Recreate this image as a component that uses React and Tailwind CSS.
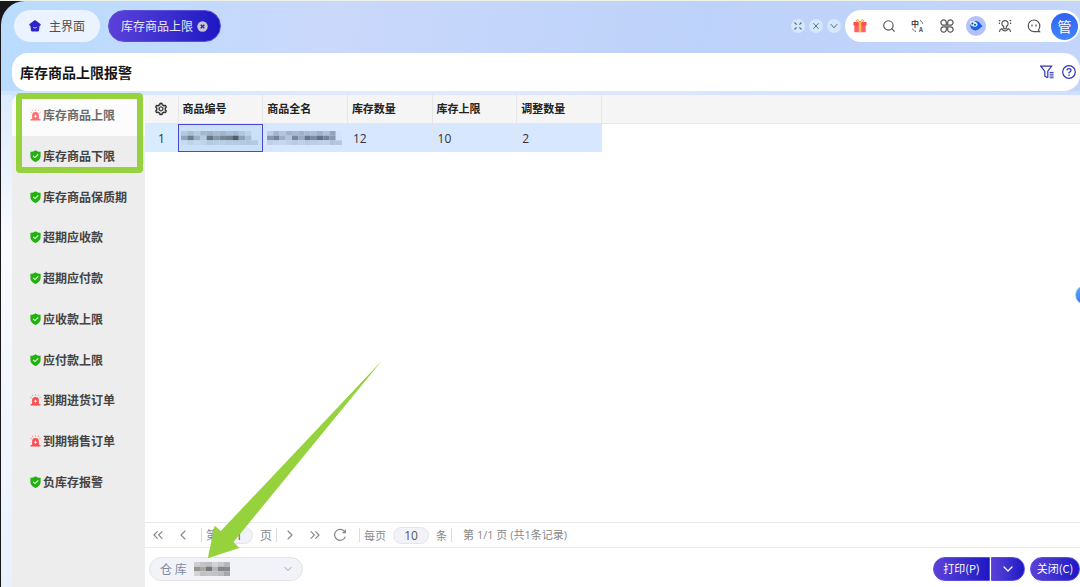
import { useState } from 'react';
import { AiOutlineSetting } from 'react-icons/ai';
import { ChevronDown, ChevronLeft, ChevronRight, ChevronsLeft, ChevronsRight, Search } from 'lucide-react';

const menu = [
  { name: '库存商品上限', alarm: true },
  { name: '库存商品下限' },
  { name: '库存商品保质期' },
  { name: '超期应收款' },
  { name: '超期应付款' },
  { name: '应收款上限' },
  { name: '应付款上限' },
  { name: '到期进货订单', alarm: true },
  { name: '到期销售订单', alarm: true },
  { name: '负库存报警' },
];

const columns = ['商品编号', '商品全名', '库存数量', '库存上限', '调整数量'];

// Pixelated values, one string per row of blocks
const codeMosaic = [
  ['#b3c9de', '#a7bdd3', '#b6cce2', '#a3b8cd', '#9db3c9', '#a5bbd1', '#a0b6cc', '#a9bfd5', '#a4bad0', '#b0c6dc', '#bcd2e9', '#cbe1f8'],
  ['#93a6b9', '#6f7e8d', '#9cafc3', '#b5cade', '#677685', '#8496a8', '#74869a', '#71808f', '#505c68', '#8ea1b5', '#a8bed4', '#cbe1f8'],
  ['#c5dbf1', '#bdd3e9', '#c3d9ef', '#bfd5eb', '#b4cae0', '#b8cee4', '#b9cfe5', '#b5cbe1', '#b4cae0', '#b3c9df', '#b2c8de', '#b4cae0'],
];
const nameMosaic = [
  ['#bccce5', '#a7b6cf', '#b3c4dd', '#a2b2cb', '#a7b8d1', '#9fafca', '#a7b8d1', '#abbcd5', '#a0b0c9', '#afc0da', '#93a3bb', '#d3e4fc'],
  ['#8896ac', '#75839a', '#9dadc6', '#b2c3dc', '#79879e', '#9aaac3', '#68758a', '#7c8aa1', '#62708a', '#76839a', '#8998af', '#d3e4fc'],
  ['#bfcfe8', '#c3d3ec', '#c6d6ef', '#c0d0e9', '#bacae3', '#bfcfe8', '#b9c9e2', '#bccce5', '#bfcfe8', '#c0d0e9', '#b2c2db', '#b6c6df'],
];
const storeMosaic = [
  ['#cfcfd1', '#c4c5c8', '#bdbfc3', '#d1d3d7', '#c5c7cb', '#b7b8bb'],
  ['#9c968f', '#a8a7a7', '#777777', '#b4b5b8', '#85868a', '#8a8a8c'],
  ['#d3d4d8', '#bfc0c3', '#c3c4c8', '#c0c1c4', '#bbbcc0', '#a6a7aa'],
];

function Mosaic({ rows, className }) {
  return (
    <svg className={className} viewBox={`0 0 ${rows[0].length * 6} 15`} preserveAspectRatio="none" aria-hidden="true">
      {rows.map((row, y) => row.map((c, x) => <rect key={`${x}-${y}`} x={x * 6} y={y * 5} width="6" height="5" fill={c} />))}
    </svg>
  );
}

export default function App() {
  const [active, setActive] = useState(0);

  return (
    <div className="min-h-screen flex flex-col relative overflow-hidden bg-[#17171c] border-t border-[#edf2e6] pl-px text-xs font-['Noto_Sans_CJK_SC',sans-serif]">
      <div className="flex-1 flex flex-col rounded-tl-3xl bg-[#f8f9ff] bg-[linear-gradient(100deg,#b9dcff_0%,#c9d8fb_28%,#bdd2fa_60%,#c6d6fb_100%)]">
        <Header />

        <div className="ml-[11px] h-[38px] shrink-0 bg-white rounded-2xl flex items-center justify-between pl-2 pr-1">
          <h1 className="text-sm font-bold text-[#151515]">库存商品上限报警</h1>
          <div className="flex items-center gap-2">
            <button aria-label="筛选"><FilterIcon /></button>
            <button aria-label="帮助"><HelpIcon /></button>
          </div>
        </div>

        <div className="flex-1 flex pt-1 pl-[11px] bg-[linear-gradient(90deg,#cfe5ff_0%,#e2eaff_35%,#cfdffc_100%)]">
          <div className="relative flex w-[133px] shrink-0 rounded-tl-lg bg-[#ededed]">
            {/* Page backdrop beside the menu */}
            <div className="absolute -left-[11px] top-0 bottom-0 w-[11px] bg-linear-to-b from-[#dcebff] via-[#f9faff] via-30% to-[#eaf1fd]" />
            <nav className="grid grid-rows-10 w-full h-[407px]">
              {menu.map((item, i) => (
                <button
                  key={item.name}
                  onClick={() => setActive(i)}
                  className={`flex items-center gap-[2px] pl-[18px] text-left font-bold ${i === active ? 'bg-[#fcfcfc] text-[#6b6b6b] rounded-tl-lg' : 'text-[#444]'}`}
                >
                  {item.alarm ? <AlarmIcon faded={i === active} /> : <ShieldIcon />}
                  {item.name}
                </button>
              ))}
            </nav>
            <div className="absolute left-1 -top-[2px] w-[127px] h-20 border-6 border-[#95d23e] rounded-sm pointer-events-none" />
          </div>

          <main className="flex-1 min-w-0 flex flex-col bg-white">
            <div className="flex-1">
              <StockTable />
            </div>
            <Footer />
          </main>
        </div>
      </div>

      {/* Floating assistant, mostly tucked behind the edge */}
      <button aria-label="助手" className="absolute top-[284px] -right-[15px] size-5 rounded-full border border-[#8fe0f4] bg-linear-to-b from-[#5aa8fb] to-[#4d6df3]" />
    </div>
  );
}

function Header() {
  const small = 'size-[14px] rounded-full bg-[#d3e8fd] text-[#5c6672] flex items-center justify-center';
  const tool = 'w-[29px] h-8 flex items-center justify-center text-[#555]';

  return (
    <header className="flex items-center pt-[9px] pb-[11px] pl-[13px]">
      <button className="h-8 w-[86px] rounded-full bg-[#eaf3ff] flex items-center justify-center gap-2 text-[#505050]">
        <HomeIcon />
        主界面
      </button>
      <button className="ml-2 h-8 w-[113px] rounded-full border border-[#5a50dc] bg-linear-to-r from-[#5b40d8] to-[#1d16c4] flex items-center justify-center gap-1 text-[#e9e8fa]">
        库存商品上限
        <CloseDot />
      </button>

      <div className="ml-auto flex items-center gap-1 pr-1">
        <button aria-label="收起" className={small}>
          <svg width="8" height="8" viewBox="0 0 8 8" fill="none" stroke="currentColor"><path d="M.5.5L2.6 2.6M7.5.5L5.4 2.6M.5 7.5L2.6 5.4M7.5 7.5L5.4 5.4" strokeWidth="1.1" /></svg>
        </button>
        <button aria-label="关闭全部" className={small}>
          <svg width="8" height="8" viewBox="0 0 8 8" fill="none" stroke="currentColor"><path d="M1.4 1.2l5.2 5.6M6.6 1.2L1.4 6.8" strokeWidth=".9" /></svg>
        </button>
        <button aria-label="更多" className={small}>
          <svg width="8" height="8" viewBox="0 0 8 8" fill="none" stroke="currentColor"><path d="M.8 2.2L4 5.8l3.2-3.6" /></svg>
        </button>
      </div>

      <div className="flex items-center bg-white rounded-full pr-[2px]">
        <button aria-label="礼物" className={tool}><GiftIcon /></button>
        <button aria-label="搜索" className={tool}><Search size={14} strokeWidth={1.9} /></button>
        <button aria-label="语言" className={tool}><LanguageIcon /></button>
        <button aria-label="应用" className={tool}><CloverIcon /></button>
        <button aria-label="小助手" className={tool}><MascotIcon /></button>
        <button aria-label="客服" className={tool}><PersonIcon /></button>
        <button aria-label="消息" className={tool}><ChatIcon /></button>
        <button className="ml-[3px] size-[27px] rounded-full bg-linear-to-b from-[#2f62f4] to-[#4584fb] text-sm leading-none text-white flex items-center justify-center">管</button>
      </div>
    </header>
  );
}

function StockTable() {
  return (
    <div className="relative">
      <div className="absolute inset-x-0 top-0 h-[29px] bg-[#f5f5f5] border-b border-[#e6e6e6]" />
      <table className="relative table-fixed w-[457px] text-[11px] border-collapse">
        <thead>
          <tr className="h-[28px] text-[#222]">
            <th className="w-[33px] border-r border-b border-[#e6e6e6]">
              <button aria-label="列设置" className="block mx-auto"><AiOutlineSetting size={14} stroke="currentColor" strokeWidth={24} /></button>
            </th>
            {columns.map((c) => (
              <th key={c} className="px-1 text-left font-bold border-r border-b border-[#e6e6e6]">{c}</th>
            ))}
          </tr>
        </thead>
        <tbody>
          <tr className="h-[29px] bg-[#d6e7ff] text-xs text-[#333] font-['Open_Sans',sans-serif]">
            <td className="pt-[2px] text-center bg-[#d8ebff]">1</td>
            <td className="p-0 bg-[#cbe1f8] shadow-[inset_0_0_0_1px_#4a48d0]">
              <Mosaic rows={codeMosaic} className="ml-[3px] mt-px w-[77px] h-[14px]" />
            </td>
            <td className="p-0 border-r border-[#dfe6ee]">
              <Mosaic rows={nameMosaic} className="ml-1 mt-px w-[75px] h-[14px]" />
            </td>
            <td className="px-[5px] pt-[2px] border-r border-[#dfe6ee]">12</td>
            <td className="px-[5px] pt-[2px] border-r border-[#dfe6ee]">10</td>
            <td className="px-[5px] pt-[2px] border-r border-[#dfe6ee]">2</td>
          </tr>
        </tbody>
      </table>
    </div>
  );
}

function Footer() {
  const nav = 'w-[25px] flex justify-center text-[#858585]';
  const field = "h-[17px] rounded-full border border-[#e3e5ea] bg-[#f1f3f9] text-center text-[#555] font-['Open_Sans',sans-serif]";
  const primary = 'h-6 border border-[#5a50dc] bg-linear-to-r from-[#5b40d8] to-[#1d16c4] text-white text-[11px]';

  return (
    <footer className="relative shrink-0">
      <div className="h-[26px] border-y border-[#e8e8e8] flex items-center text-[#888]">
        <button aria-label="首页" className={nav}><ChevronsLeft size={16} strokeWidth={1.6} /></button>
        <button aria-label="上一页" className={nav}><ChevronLeft size={16} strokeWidth={1.6} /></button>
        <label className="ml-[6px] px-1 border-l border-[#dcdcdc] flex items-center h-[14px]">
          第
          <input defaultValue="1" className={`${field} w-[28px] mx-[7px]`} />
          页
        </label>
        <span className="w-px h-[14px] bg-[#dcdcdc]" />
        <button aria-label="下一页" className={nav}><ChevronRight size={16} strokeWidth={1.6} /></button>
        <button aria-label="末页" className={nav}><ChevronsRight size={16} strokeWidth={1.6} /></button>
        <button aria-label="刷新" className={nav}>
          <svg width="14" height="14" viewBox="0 0 14 14" fill="none" stroke="currentColor" strokeWidth="1.2"><path d="M11.9 4.2A5.5 5.5 0 1 0 12.3 8.6M12.3 1.6v3H9.4" /></svg>
        </button>
        <label className="ml-[7px] pl-1 border-l border-[#dcdcdc] flex items-center h-[14px] text-[11px]">
          每页
          <input defaultValue="10" className={`${field} w-[36px] mx-[7px] text-xs`} />
          条
        </label>
        <span className="ml-1 pl-[11px] border-l border-[#dcdcdc] flex items-center h-[14px] text-[11px] font-['Open_Sans','Noto_Sans_CJK_SC',sans-serif]">第 1/1 页 (共1条记录)</span>
      </div>

      <div className="h-[39px] flex items-center pl-1 pt-[2px]">
        <div className="flex items-center w-[154px] h-6 rounded-full border border-[#e2e4e9] bg-[#f1f3f9] pl-[10px] text-[#7f8aa0]">
          <label htmlFor="store">仓 库</label>
          <div className="relative flex-1 flex items-center ml-[7px]">
            <select id="store" className="w-full h-[22px] appearance-none bg-transparent">
              <option value=""></option>
            </select>
            <Mosaic rows={storeMosaic} className="absolute left-0 w-9 h-[14px] pointer-events-none" />
            <ChevronDown size={12} strokeWidth={1.6} className="absolute right-2 pointer-events-none" />
          </div>
        </div>
        <div className="ml-auto flex">
          <button className={`${primary} w-[57px] rounded-l-full`}>打印(P)</button>
          <button aria-label="打印选项" className={`${primary} ml-px w-[34px] rounded-r-full flex items-center justify-center`}>
            <ChevronDown size={16} strokeWidth={1.8} />
          </button>
          <button className={`${primary} ml-[5px] w-[50px] rounded-full`}>关闭(C)</button>
        </div>
      </div>

      {/* Pointer to the warehouse filter */}
      <svg className="absolute left-[62px] -top-[162px] pointer-events-none" width="176" height="199" viewBox="0 0 176 199" fill="#95d23e">
        <path d="M.8 198.3L7.6 165.8L13.8 171L175 .5L26.5 182L32.3 188Z" />
      </svg>
    </footer>
  );
}

function ShieldIcon() {
  return (
    <svg className="shrink-0" width="11" height="12" viewBox="0 0 11 12">
      <path d="M5.5.2C7 1.3 8.8 1.7 10.6 1.8V6.2C10.6 8.8 8.6 10.7 5.5 11.9C2.4 10.7.4 8.8.4 6.2V1.8C2.2 1.7 4 1.3 5.5.2Z" fill="#22b20e" />
      <path d="M3.1 5.8L5 7.6L8.2 4.4" fill="none" stroke="#e9f8e6" strokeWidth="1.1" />
    </svg>
  );
}

function AlarmIcon({ faded }) {
  return (
    <svg className={`shrink-0 ${faded ? 'opacity-80' : ''}`} width="11" height="12" viewBox="0 0 11 12" fill="#ff4d4f">
      <path d="M2.1 10V6.5a3.4 3.4 0 0 1 6.8 0V10H10.4v1.6H.6V10Z" />
      <path d="M5.5.2v1.5M.2 3.1l1.5.8M10.8 3.1l-1.5.8M2.2.8l.7 1.2M8.8.8l-.7 1.2" stroke="#ff8a8b" strokeWidth=".9" />
      <path d="M5.5 5.2L6.1 6.6L7.4 7.2L6.1 7.8L5.5 9.2L4.9 7.8L3.6 7.2L4.9 6.6Z" fill="#fff" />
    </svg>
  );
}

function HomeIcon() {
  return (
    <svg width="12" height="12" viewBox="0 0 12 12">
      <path d="M5.2.6Q6 .1 6.8.6L11.4 3.9Q12.1 4.6 11.6 5.3L10.6 6L10 10.4Q9.8 11.4 8.7 11.4H3.3Q2.2 11.4 2 10.4L1.4 6L.4 5.3Q-.1 4.6 .6 3.9Z" fill="#2f24c8" />
      <path d="M4.2 7.2Q6 9.2 7.8 7.2" fill="none" stroke="#d9d8ff" strokeWidth=".9" />
    </svg>
  );
}

function CloseDot() {
  return (
    <svg width="11" height="11" viewBox="0 0 11 11">
      <circle cx="5.5" cy="5.5" r="5.2" fill="#c9c7d6" />
      <path d="M3.7 3.7l3.6 3.6M7.3 3.7L3.7 7.3" stroke="#2a22b8" strokeWidth="1.4" />
    </svg>
  );
}

function GiftIcon() {
  return (
    <svg width="14" height="14" viewBox="0 0 14 14">
      <rect x="1.3" y="5" width="11.4" height="8.2" rx=".8" fill="#ff5f6d" />
      <rect x=".4" y="3" width="13.2" height="3.6" rx=".6" fill="#f8524f" />
      <path d="M7 3.2C5.6.4 3.4.2 3.4 1.8C3.4 2.8 5 3.2 7 3.2ZM7 3.2C8.4.4 10.6.2 10.6 1.8C10.6 2.8 9 3.2 7 3.2Z" fill="none" stroke="#fb8d3d" />
      <rect x="5.8" y="3" width="2.4" height="10.2" fill="#ffc34d" />
    </svg>
  );
}

function LanguageIcon() {
  return (
    <svg className="overflow-visible" width="14" height="14" viewBox="0 0 14 14" fill="none" stroke="#4a4a4a">
      <text x="0" y="8" fontSize="8" fontWeight="700" fill="#4a4a4a" stroke="none">中</text>
      <text x="8" y="13" fontSize="6" fontWeight="700" fill="#4a4a4a" stroke="none">A</text>
      <path d="M9 1.6Q11 1.8 11.6 4.6M1.8 9.6Q2.2 12 5 12.4" strokeDasharray="2 1" />
    </svg>
  );
}

function CloverIcon() {
  return (
    <svg width="14" height="14" viewBox="0 0 14 14" fill="none" stroke="currentColor" strokeWidth="1.2">
      <path d="M6.3 6.2H3.7A2.7 2.7 0 1 1 6.3 3.6ZM7.7 6.2H10.3A2.7 2.7 0 1 0 7.7 3.6ZM6.3 7.8H3.7A2.7 2.7 0 1 0 6.3 10.4ZM7.7 7.8H10.3A2.7 2.7 0 1 1 7.7 10.4Z" />
    </svg>
  );
}

function MascotIcon() {
  return (
    <svg width="20" height="20" viewBox="0 0 20 20">
      <circle cx="10" cy="10" r="10" fill="#b5c1fb" />
      <path d="M4 6.6C6 5 10.6 4.2 13.4 6.6L16.4 10.2L13.6 12.6C11.4 15.4 6 15 4.6 11Z" fill="#1463e8" />
      <path d="M3.6 5.6C5.6 4.8 8.8 4.6 10.8 6.8C12.6 9 11 11.2 8 10.8C5 10.4 3.6 8 3.6 5.6Z" fill="#d9eefd" />
      <circle cx="6.4" cy="7.4" r="1" fill="#24496e" />
      <circle cx="9" cy="8.8" r="1" fill="#24496e" />
    </svg>
  );
}

function PersonIcon() {
  return (
    <svg width="14" height="14" viewBox="0 0 14 14" fill="none" stroke="currentColor" strokeWidth="1.2">
      <path d="M5.6 7.4A3.1 3.1 0 1 1 8.4 7.4V9.2L7 10L5.6 9.2ZM1.4 12.8Q1.8 10 3.8 9.6Q5.2 12 7 12Q8.8 12 10.2 9.6Q12.2 10 12.6 12.8" />
      <path d="M.8 1.6h1.6M11.6 1.6h1.6M1.4 5V3.6M12.6 5V3.6" />
    </svg>
  );
}

function ChatIcon() {
  return (
    <svg width="14" height="14" viewBox="0 0 14 14" fill="none" stroke="currentColor" strokeWidth="1.2">
      <path d="M12.6 12.6H7A5.8 5.8 0 1 1 12.8 7Q12.8 9.2 11.4 11Z" />
      <path d="M5 5.6v1.8M9 5.6v1.8" />
    </svg>
  );
}

function FilterIcon() {
  return (
    <svg width="14" height="14" viewBox="0 0 14 14" fill="none" stroke="#2f36b4" strokeWidth="1.2">
      <path d="M7.4 12.8L4.8 11V6.4L.8 1.2H11.6L7.8 6.2V12.8" />
      <path d="M9.6 7.4h4M9.6 9.2h4M9.6 11h4M9.6 12.8h4" strokeWidth="1" />
    </svg>
  );
}

function HelpIcon() {
  return (
    <svg width="14" height="14" viewBox="0 0 14 14" fill="none" stroke="#2f36b4" strokeWidth="1.2">
      <circle cx="7" cy="7" r="6.3" />
      <path d="M5 5.6Q5 3.7 7 3.7Q9 3.7 9 5.4Q9 6.6 7 7.4V8.6M7 9.6V11" />
    </svg>
  );
}
